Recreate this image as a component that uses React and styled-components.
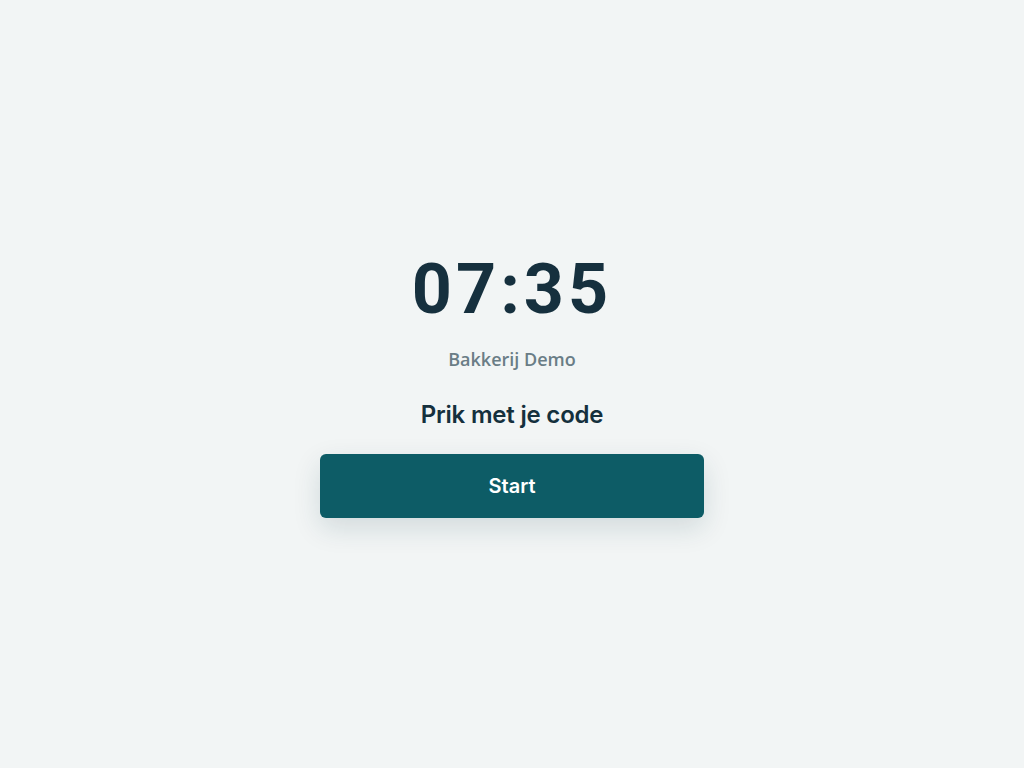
import styled, { createGlobalStyle } from "styled-components";

const Global = createGlobalStyle`
  html, body, #root {
    margin: 0;
    height: 100%;
  }
  body {
    background: #f2f5f5;
    font-family: Inter, "Noto Sans", sans-serif;
  }
`;

const Screen = styled.main`
  min-height: 100vh;
  display: flex;
  align-items: center;
  justify-content: center;
`;

const Panel = styled.div`
  width: 384px;
  padding-top: 3px;
  display: flex;
  flex-direction: column;
  align-items: center;
`;

const Clock = styled.div`
  font-family: "Roboto", "Noto Sans", sans-serif;
  font-weight: 700;
  font-size: 70px;
  line-height: 1;
  letter-spacing: 4px;
  color: #16303e;
`;

const Company = styled.div`
  margin-top: 23px;
  font-family: "Open Sans", "Noto Sans", sans-serif;
  font-weight: 600;
  font-size: 18px;
  color: #6a7d86;
`;

const Prompt = styled.h1`
  margin: 29px 0 0;
  font-family: Inter, "Noto Sans", sans-serif;
  font-weight: 600;
  font-size: 24px;
  letter-spacing: -0.2px;
  color: #15303d;
`;

const StartButton = styled.button`
  margin-top: 25px;
  width: 100%;
  height: 64px;
  border: 0;
  border-radius: 6px;
  background: #0d5c66;
  color: #ffffff;
  font-family: Inter, "Noto Sans", sans-serif;
  font-weight: 600;
  font-size: 20px;
  cursor: pointer;
  box-shadow: 0 10px 28px rgba(13, 60, 70, 0.14);
`;

export default function App() {
  return (
    <>
      <Global />
      <Screen>
        <Panel>
          <Clock>07:35</Clock>
          <Company>Bakkerij Demo</Company>
          <Prompt>Prik met je code</Prompt>
          <StartButton>Start</StartButton>
        </Panel>
      </Screen>
    </>
  );
}
